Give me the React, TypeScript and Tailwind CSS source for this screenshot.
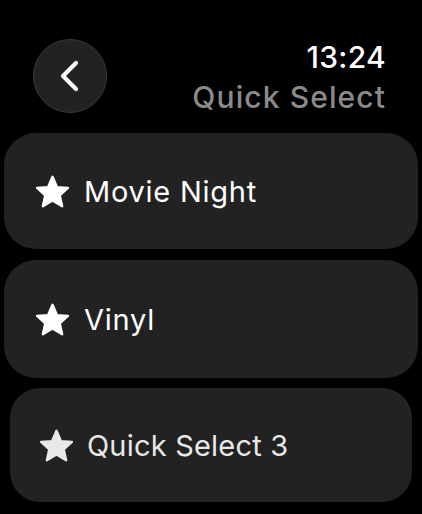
import React from "react";

/** 색상 토큰 */
const colors = {
  card: "#222222",
  sub: "#8a8a8a",
};

type Preset = { label: string; dim?: boolean };

const presets: Preset[] = [
  { label: "Movie Night" },
  { label: "Vinyl" },
  { label: "Quick Select 3", dim: true },
];

function StarIcon({ className = "" }: { className?: string }) {
  return (
    <svg viewBox="0 -1 100 94" className={className} fill="currentColor" stroke="currentColor" strokeWidth={7} strokeLinejoin="round">
      <polygon points="50,4 62.7,33.5 94,35.8 70.5,56.7 77.5,88 50,71.6 22.5,88 29.5,56.7 6,35.8 37.3,33.5" />
    </svg>
  );
}

function Chevron() {
  return (
    <svg viewBox="0 0 22 32" className="w-[22px] h-[32px]" fill="none" stroke="white" strokeWidth={4.2} strokeLinecap="round" strokeLinejoin="round">
      <polyline points="18,3 5,16 18,29" />
    </svg>
  );
}

export default function App() {
  return (
    <div
      className="w-[422px] h-[514px] overflow-hidden bg-black text-white"
      style={{ fontFamily: "Inter, 'Noto Sans', sans-serif" }}
    >
      {/* 헤더 */}
      <header className="flex items-start justify-between pt-[37px] pl-[33px] pr-[36px]">
        <button className="mt-[2px] w-[74px] h-[74px] rounded-full bg-[#222222] border border-[#3a3a3a] flex items-center justify-center pr-[3px]">
          <Chevron />
        </button>
        <div className="text-right text-[30px] leading-[40px]">
          <div className="font-medium tracking-[0.3px]">13:24</div>
          <div className="font-medium tracking-[1.1px]" style={{ color: colors.sub }}>
            Quick Select
          </div>
        </div>
      </header>

      {/* 목록 */}
      <main className="mt-[16px] flex flex-col">
        {presets.map((p, i) => (
          <div
            key={p.label}
            className={
              p.dim
                ? "mx-[10px] mt-[10px] h-[114px] rounded-[30px] flex items-center pl-[29px] gap-[13px] text-[#e8e8e8]"
                : i === 0
                ? "mx-[4px] h-[116px] rounded-[32px] flex items-center pl-[31px] gap-[14px]"
                : "mx-[4px] mt-[11px] h-[118px] rounded-[32px] flex items-center pl-[31px] gap-[14px]"
            }
            style={{ backgroundColor: colors.card }}
          >
            <StarIcon className="w-[35px] h-[33px]" />
            <span className={p.dim ? "text-[29px] leading-none tracking-[0.2px]" : "text-[29px] leading-none tracking-[0.75px]"}>
              {p.label}
            </span>
          </div>
        ))}
      </main>
    </div>
  );
}
